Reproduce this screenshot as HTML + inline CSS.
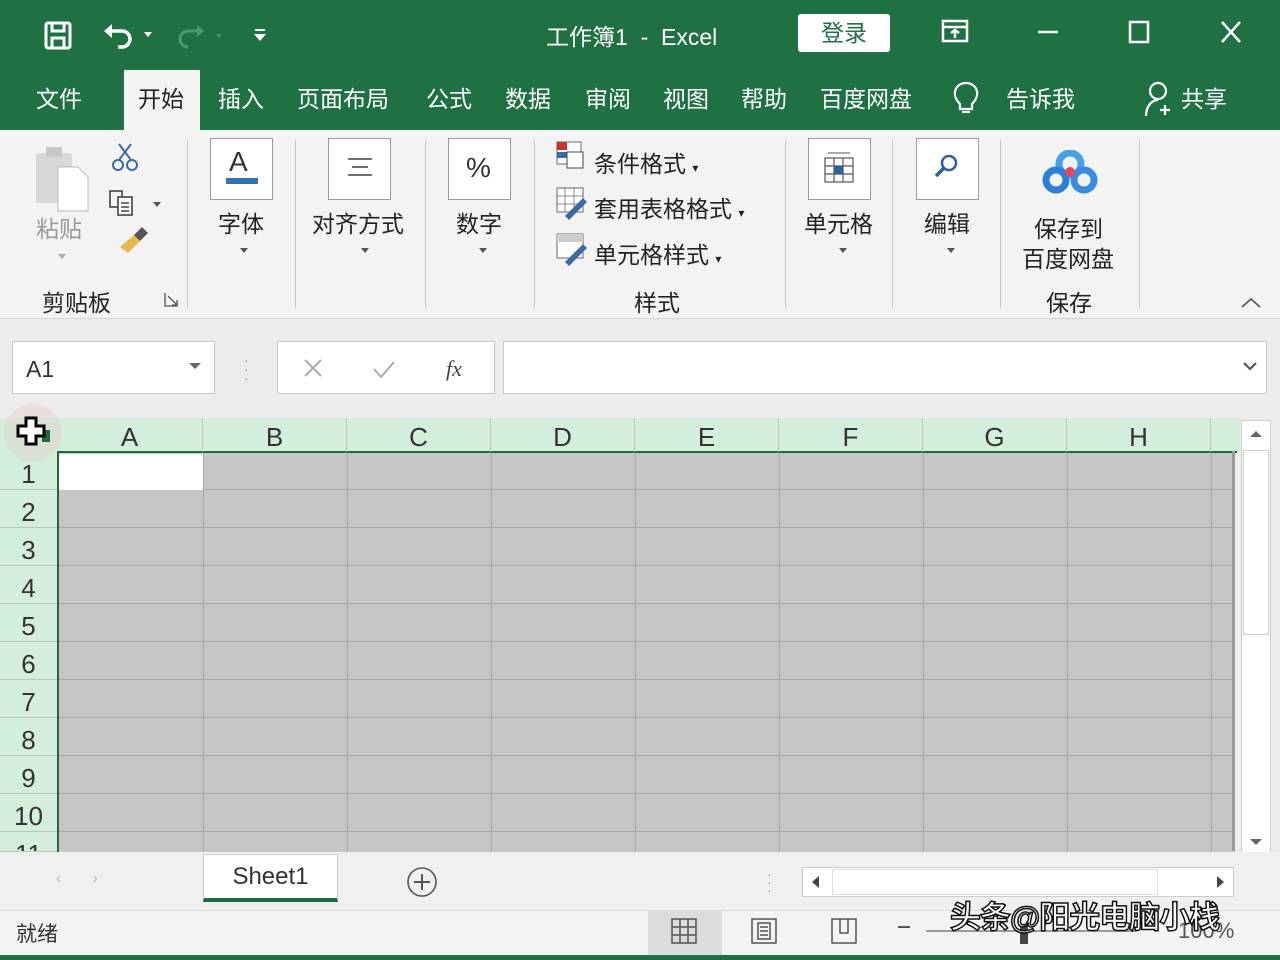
<!DOCTYPE html>
<html><head><meta charset="utf-8"><style>
*{margin:0;padding:0;box-sizing:border-box}
body{width:1280px;height:960px;overflow:hidden;background:#ececec;font-family:"Liberation Sans","Noto Sans CJK SC",sans-serif;position:relative}
.a{position:absolute}
.g{background:#1f7144}
.wt{color:#fff;font-size:23px}
.tab{position:absolute;top:80px;color:#fff;font-size:23px}
.rl{position:absolute;font-size:23px;color:#222}
.sep{position:absolute;top:140px;width:1px;height:168px;background:#c8c8c8}
.box{position:absolute;background:#fff;border:1px solid #9a9a9a}
.arr{position:absolute;width:0;height:0;border-left:4px solid transparent;border-right:4px solid transparent;border-top:5px solid #555}
.ch{position:absolute;top:418px;height:34px;font-size:26px;color:#333;text-align:center;line-height:38px;border-right:1px solid #b8c8bc}
.rh{position:absolute;left:0;width:57px;height:38px;font-size:26px;color:#333;text-align:center;line-height:44px;border-bottom:1px solid #b8c8bc}
</style></head><body>
<div class="a g" style="left:0;top:0;width:1280px;height:130px"></div>
<svg class="a" style="left:40px;top:18px" width="240" height="34" viewBox="0 0 240 34">
<g fill="none" stroke="#fff" stroke-width="3"><rect x="6" y="5" width="24" height="25" rx="2"/><rect x="12" y="5" width="12" height="8"/><rect x="12" y="20" width="12" height="10"/></g>
<path d="M70 13 h12 a8 8 0 0 1 0 16 h-4" stroke="#fff" stroke-width="3.5" fill="none"/><path d="M64 13 l8 -7 v14z" fill="#fff"/>
<path d="M104 14 l4 5 l4 -5z" fill="#fff"/>
<path d="M160 13 h-12 a8 8 0 0 0 0 16" stroke="#4f9a6d" stroke-width="3" fill="none"/><path d="M164 13 l-7 -6 v12z" fill="#4f9a6d"/>
<path d="M176 16 l3 4 l3 -4z" fill="#4f9a6d"/>
<rect x="215" y="11" width="10" height="2" fill="#fff"/><path d="M214 16 l6 7 l6 -7z" fill="#fff"/>
</svg>
<div class="a wt" style="left:546px;top:18px">工作簿1 &nbsp;- &nbsp;Excel</div>
<div class="a" style="left:798px;top:14px;width:92px;height:38px;background:#fff;border-radius:3px;color:#1f7144;font-size:23px;text-align:center;line-height:38px">登录</div>
<svg class="a" style="left:940px;top:18px" width="310" height="30"><g stroke="#fff" stroke-width="2.5" fill="none"><rect x="3" y="3" width="24" height="20"/><path d="M3 9h24M15 12v8M11 15l4-3 4 3"/><path d="M98 14h20"/><rect x="190" y="4" width="18" height="20"/><path d="M282 4l18 20M300 4l-18 20"/></g></svg>
<div class="tab" style="left:36px">文件</div>
<div class="a" style="left:124px;top:70px;width:76px;height:62px;background:#f3f3f3"></div>
<div class="tab" style="left:138px;color:#222">开始</div>
<div class="tab" style="left:218px">插入</div>
<div class="tab" style="left:297px">页面布局</div>
<div class="tab" style="left:426px">公式</div>
<div class="tab" style="left:505px">数据</div>
<div class="tab" style="left:585px">审阅</div>
<div class="tab" style="left:663px">视图</div>
<div class="tab" style="left:741px">帮助</div>
<div class="tab" style="left:820px">百度网盘</div>
<svg class="a" style="left:952px;top:80px" width="28" height="38"><g stroke="#fff" stroke-width="2.2" fill="none"><path d="M8 24 c-10-10-4-21 6-21 s16 11 6 21 v5 h-12z"/><path d="M10 32h8"/></g></svg>
<div class="tab" style="left:1006px">告诉我</div>
<svg class="a" style="left:1144px;top:80px" width="32" height="38"><g stroke="#fff" stroke-width="2.2" fill="none"><circle cx="14" cy="11" r="8"/><path d="M2 36c0-10 6-16 12-16M16 30h10M21 25v10"/></g></svg>
<div class="tab" style="left:1181px">共享</div>
<div class="a" style="left:0;top:130px;width:1280px;height:189px;background:#f3f3f3;border-bottom:1px solid #d4d4d4"></div>
<svg class="a" style="left:34px;top:143px" width="135" height="125">
<rect x="2" y="10" width="36" height="50" rx="3" fill="#d8d8d8"/><rect x="12" y="4" width="16" height="10" fill="#c8c8c8"/><path d="M24 24h20l10 10v34h-30z" fill="#fff" stroke="#bbb"/>
<g fill="none" stroke="#3d6aa6" stroke-width="2"><circle cx="84" cy="22" r="5"/><circle cx="98" cy="22" r="5"/><path d="M85 17l12-16M97 17l-12-16"/></g>
<g fill="none" stroke="#444" stroke-width="1.6"><rect x="76" y="48" width="12" height="16"/><rect x="84" y="54" width="14" height="18" fill="#fff"/><path d="M87 60h8M87 64h8M87 68h8"/></g>
<path d="M119 59l4 5l4-5z" fill="#555"/>
<path d="M86 104l14-12l6 6l-12 12z" fill="#e8b84a"/><path d="M100 92l8-8l6 6l-8 8z" fill="#555"/>
</svg>
<div class="rl" style="left:36px;top:210px;color:#999">粘贴</div>
<div class="arr" style="left:58px;top:254px;border-top-color:#aaa"></div>
<div class="rl" style="left:42px;top:284px">剪贴板</div>
<svg class="a" style="left:164px;top:292px" width="16" height="16"><g stroke="#555" stroke-width="1.3" fill="none"><path d="M1 1v13h13"/><path d="M4 4l9 9M13 8v5h-5"/></g></svg>
<div class="sep" style="left:187px"></div>
<div class="box" style="left:210px;top:138px;width:63px;height:62px"></div>
<div class="a" style="left:229px;top:146px;font-size:28px;color:#333">A</div>
<div class="a" style="left:226px;top:178px;width:32px;height:6px;background:#2e75b6"></div>
<div class="rl" style="left:218px;top:205px">字体</div><div class="arr" style="left:240px;top:248px"></div>
<div class="sep" style="left:295px"></div>
<div class="box" style="left:328px;top:138px;width:63px;height:62px"></div>
<svg class="a" style="left:345px;top:155px" width="30" height="26"><g stroke="#444" stroke-width="1.5"><path d="M3 4h24M7 12h16M3 20h24"/></g></svg>
<div class="rl" style="left:312px;top:205px">对齐方式</div><div class="arr" style="left:361px;top:248px"></div>
<div class="sep" style="left:425px"></div>
<div class="box" style="left:448px;top:138px;width:63px;height:62px"></div>
<div class="a" style="left:466px;top:152px;font-size:28px;color:#333">%</div>
<div class="rl" style="left:456px;top:205px">数字</div><div class="arr" style="left:479px;top:248px"></div>
<div class="sep" style="left:534px"></div>
<svg class="a" style="left:555px;top:140px" width="35" height="130">
<rect x="2" y="2" width="24" height="22" fill="#fff" stroke="#666"/><rect x="2" y="2" width="10" height="8" fill="#c0392b"/><rect x="2" y="12" width="10" height="6" fill="#3d6aa6"/><rect x="12" y="12" width="16" height="16" fill="#fff" stroke="#444"/>
<rect x="2" y="48" width="26" height="24" fill="#fff" stroke="#666"/><path d="M2 56h26M2 64h26M10 48v24M19 48v24" stroke="#888"/><path d="M10 76l18-18l4 4l-18 18z" fill="#3d6aa6"/>
<rect x="2" y="94" width="26" height="24" fill="#fff" stroke="#666"/><rect x="2" y="94" width="26" height="8" fill="#ccc"/><path d="M10 122l18-18l4 4l-18 18z" fill="#3d6aa6"/>
</svg>
<div class="rl" style="left:594px;top:145px">条件格式 <span style="font-size:12px">▾</span></div>
<div class="rl" style="left:594px;top:190px">套用表格格式 <span style="font-size:12px">▾</span></div>
<div class="rl" style="left:594px;top:236px">单元格样式 <span style="font-size:12px">▾</span></div>
<div class="rl" style="left:634px;top:284px">样式</div>
<div class="sep" style="left:785px"></div>
<div class="box" style="left:808px;top:138px;width:63px;height:62px"></div>
<svg class="a" style="left:822px;top:150px" width="34" height="36"><g stroke="#555" stroke-width="1.2" fill="#fff"><rect x="3" y="8" width="28" height="24"/><path d="M3 16h28M3 24h28M12 8v24M21 8v24" fill="none"/></g><rect x="12" y="16" width="9" height="8" fill="#2e5e9e"/><path d="M6 3h22" stroke="#555"/></svg>
<div class="rl" style="left:804px;top:205px">单元格</div><div class="arr" style="left:839px;top:248px"></div>
<div class="sep" style="left:892px"></div>
<div class="box" style="left:916px;top:138px;width:63px;height:62px"></div>
<svg class="a" style="left:932px;top:152px" width="30" height="30"><circle cx="17" cy="11" r="7" stroke="#2e5e9e" stroke-width="2.5" fill="none"/><path d="M12 16l-8 8" stroke="#2e5e9e" stroke-width="3.5"/></svg>
<div class="rl" style="left:924px;top:205px">编辑</div><div class="arr" style="left:947px;top:248px"></div>
<div class="sep" style="left:1000px"></div>
<svg class="a" style="left:1042px;top:150px" width="56" height="46"><circle cx="28" cy="14" r="11" fill="none" stroke="#4aa0e0" stroke-width="7"/><circle cx="14" cy="30" r="10" fill="none" stroke="#2b7fd6" stroke-width="7"/><circle cx="42" cy="30" r="10" fill="none" stroke="#3b8be0" stroke-width="7"/><circle cx="28" cy="22" r="5" fill="#e8455a"/></svg>
<div class="rl" style="left:1034px;top:210px">保存到</div>
<div class="rl" style="left:1022px;top:240px">百度网盘</div>
<div class="rl" style="left:1046px;top:284px">保存</div>
<div class="sep" style="left:1139px"></div>
<svg class="a" style="left:1240px;top:296px" width="22" height="14"><path d="M2 11l9-8l9 8" stroke="#555" stroke-width="1.6" fill="none"/></svg>
<div class="box" style="left:12px;top:341px;width:203px;height:53px;border-color:#c6c6c6"></div>
<div class="a" style="left:26px;top:356px;font-size:23px;color:#333">A1</div>
<div class="arr" style="left:189px;top:363px;border-top-color:#666;border-width:6px 6px 0"></div>
<div class="a" style="left:244px;top:356px;color:#999;font-size:14px;line-height:9px">·<br>·<br>·</div>
<div class="box" style="left:277px;top:341px;width:218px;height:53px;border-color:#c6c6c6"></div>
<svg class="a" style="left:300px;top:355px" width="180" height="28"><g stroke="#aaa" stroke-width="2" fill="none"><path d="M5 5l16 16M21 5l-16 16M74 14l7 8l13-15"/></g><text x="146" y="21" font-family="Liberation Serif" font-style="italic" font-size="22" fill="#444">fx</text></svg>
<div class="box" style="left:503px;top:341px;width:764px;height:53px;border-color:#c6c6c6"></div>
<svg class="a" style="left:1242px;top:360px" width="16" height="12"><path d="M2 3l6 6l6-6" stroke="#555" stroke-width="2.2" fill="none"/></svg>
<div class="a" style="left:0;top:418px;width:1240px;height:34px;background:#d3efdb"></div>
<div class="a" style="left:0;top:452px;width:57px;height:400px;background:#d3efdb"></div>
<div class="a" style="left:57px;top:452px;width:1178px;height:400px;background:#c6c6c6"></div>
<div class="a" style="left:57px;top:452px;width:1178px;height:400px;background-image:linear-gradient(to bottom,transparent 37px,#a8a8a8 37px);background-size:100% 38px"></div>
<div class="a" style="left:203px;top:452px;width:1032px;height:400px;background-image:linear-gradient(to right,#a8a8a8 1px,transparent 1px);background-size:144px 100%"></div>
<div class="a" style="left:59px;top:454px;width:144px;height:36px;background:#fff"></div>
<div class="a" style="left:57px;top:451px;width:1180px;height:403px;border:2.5px solid #1e6b42;border-bottom:none;border-right:none"></div>
<div class="a" style="left:1232px;top:451px;width:3px;height:400px;background:#999"></div>
<div class="ch" style="left:57px;width:146px">A</div>
<div class="ch" style="left:203px;width:144px">B</div>
<div class="ch" style="left:347px;width:144px">C</div>
<div class="ch" style="left:491px;width:144px">D</div>
<div class="ch" style="left:635px;width:144px">E</div>
<div class="ch" style="left:779px;width:144px">F</div>
<div class="ch" style="left:923px;width:144px">G</div>
<div class="ch" style="left:1067px;width:144px">H</div>
<div class="rh" style="top:452px">1</div><div class="rh" style="top:490px">2</div><div class="rh" style="top:528px">3</div><div class="rh" style="top:566px">4</div><div class="rh" style="top:604px">5</div><div class="rh" style="top:642px">6</div><div class="rh" style="top:680px">7</div><div class="rh" style="top:718px">8</div><div class="rh" style="top:756px">9</div><div class="rh" style="top:794px">10</div><div class="rh" style="top:832px;height:20px;overflow:hidden">11</div>
<div class="a" style="left:4px;top:404px;width:58px;height:58px;border-radius:50%;background:rgba(230,200,200,0.35)"></div>
<svg class="a" style="left:16px;top:416px" width="36" height="32"><rect x="26" y="14" width="8" height="12" fill="#1e6b42"/><path d="M10 2h10v8h8v10h-8v8h-10v-8h-8v-10h8z" fill="#fff" stroke="#000" stroke-width="3"/></svg>
<div class="a" style="left:1241px;top:420px;width:30px;height:435px;background:#fff;border:1px solid #ccc"></div>
<div class="a" style="left:1243px;top:450px;width:26px;height:185px;background:#fff;border:1px solid #ccc"></div>
<svg class="a" style="left:1248px;top:428px" width="16" height="12"><path d="M2 9l6-6l6 6z" fill="#666"/></svg>
<svg class="a" style="left:1248px;top:836px" width="16" height="12"><path d="M2 3l6 6l6-6z" fill="#666"/></svg>
<div class="a" style="left:0;top:852px;width:1280px;height:58px;background:#f0f0f0"></div>
<div class="a" style="left:56px;top:870px;color:#bbb;font-size:16px">‹ &nbsp; &nbsp; &nbsp; ›</div>
<div class="a" style="left:203px;top:854px;width:135px;height:48px;background:#fff;border:1px solid #ccc;border-bottom:4px solid #1e6b42;text-align:center;line-height:44px;font-size:24px;color:#333">Sheet1</div>
<svg class="a" style="left:405px;top:865px" width="34" height="34"><circle cx="17" cy="17" r="14" fill="none" stroke="#555" stroke-width="1.6"/><path d="M17 9v16M9 17h16" stroke="#555" stroke-width="2"/></svg>
<div class="a" style="left:767px;top:870px;color:#999;font-size:14px;line-height:8px">·<br>·<br>·</div>
<div class="a" style="left:802px;top:867px;width:432px;height:30px;background:#fff;border:1px solid #ccc"></div>
<div class="a" style="left:832px;top:869px;width:326px;height:26px;background:#fff;border:1px solid #ddd"></div>
<svg class="a" style="left:808px;top:874px" width="16" height="16"><path d="M11 2l-7 6l7 6z" fill="#444"/></svg>
<svg class="a" style="left:1212px;top:874px" width="16" height="16"><path d="M5 2l7 6l-7 6z" fill="#444"/></svg>
<div class="a" style="left:0;top:910px;width:1280px;height:46px;background:#f3f3f3;border-top:1px solid #ddd"></div>
<div class="a" style="left:16px;top:918px;font-size:21px;color:#333">就绪</div>
<div class="a" style="left:648px;top:911px;width:74px;height:44px;background:#dcdcdc"></div>
<svg class="a" style="left:670px;top:917px" width="200" height="28"><g stroke="#555" stroke-width="1.5" fill="none"><rect x="2" y="2" width="24" height="24"/><path d="M10 2v24M18 2v24M2 10h24M2 18h24"/><rect x="82" y="2" width="24" height="24"/><rect x="88" y="6" width="12" height="16"/><path d="M90 10h8M90 14h8M90 18h8"/><rect x="162" y="2" width="24" height="24"/><path d="M170 2v14h8v-14"/></g></svg>
<div class="a" style="left:898px;top:926px;width:12px;height:2px;background:#555"></div>
<div class="a" style="left:926px;top:930px;width:210px;height:2px;background:#999"></div>
<div class="a" style="left:1020px;top:924px;width:8px;height:20px;background:#444"></div>
<div class="a" style="left:1178px;top:918px;font-size:22px;color:#555">100%</div>
<div class="a" style="left:950px;top:892px;font-size:31px;color:#fff;font-weight:bold;-webkit-text-stroke:1.5px #111;letter-spacing:-1px">头条@阳光电脑小栈</div>
<div class="a g" style="left:0;top:955px;width:1280px;height:5px"></div>
</body></html>
